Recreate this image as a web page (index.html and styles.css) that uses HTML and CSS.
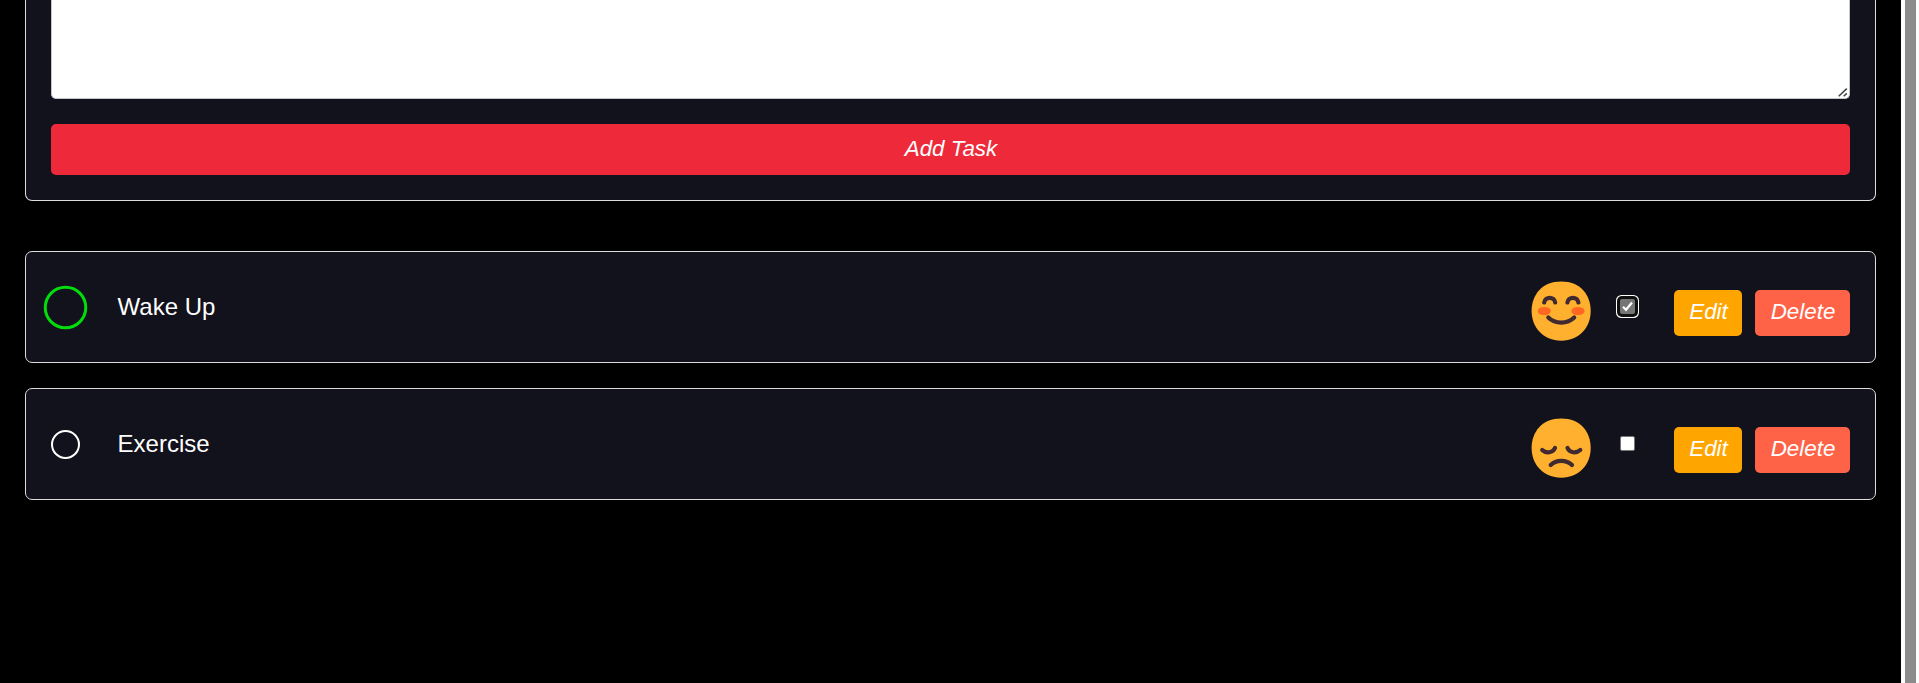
FILE: index.html
```html
<!DOCTYPE html>
<html lang="en">
<head>
<meta charset="utf-8">
<title>Tasks</title>
<link rel="stylesheet" href="styles.css">
</head>
<body>
<div class="app">
  <main class="page">
    <form class="card task-form">
      <div class="note">
        <svg class="grip" viewBox="0 0 10 9"><path d="M.7 8.3 8.8.6M5.7 8.3 8.8 5.4" fill="none" stroke="#444" stroke-width="1.5"/></svg>
      </div>
      <button type="button" class="btn add">Add Task</button>
    </form>
    <section class="list">
      <article class="card task">
        <span class="slot"><span class="ring done"></span></span>
        <span class="title">Wake Up</span>
        <svg class="face" viewBox="0 0 60 60">
          <path class="head" d="M30.2.5C49.5.5 59.7 14 59.7 30S48.5 59.7 30.2 59.7.6 46 .6 30 11 .5 30.2.5Z"/>
          <ellipse class="cheek" cx="13.3" cy="30" rx="6.6" ry="4.1"/>
          <ellipse class="cheek" cx="47" cy="30" rx="6.6" ry="4.1"/>
          <path class="line" d="M13.2 21.5C14 15.2 23.4 15.2 24.2 21.5M36.4 21.5C37.2 15.2 46.6 15.2 47.4 21.5M17.3 36.5C24 43.2 36.5 43.2 43.2 36.5"/>
        </svg>
        <span class="check checked"><svg viewBox="0 0 15 15"><path d="M3 7.8 6 10.8 12 3.5" fill="none" stroke="#fff" stroke-width="2.2"/></svg></span>
        <button type="button" class="btn edit">Edit</button>
        <button type="button" class="btn delete">Delete</button>
      </article>
      <article class="card task">
        <span class="slot"><span class="ring"></span></span>
        <span class="title">Exercise</span>
        <svg class="face" viewBox="0 0 60 60">
          <path class="head" d="M30.2.5C49.5.5 59.7 14 59.7 30S48.5 59.7 30.2 59.7.6 46 .6 30 11 .5 30.2.5Z"/>
          <path class="line" d="M11.2 32C15 35.8 22 34.8 24 30M36.5 30C38.5 34.8 45 35.8 49.3 32M19.7 47C25 41.4 35.5 41.4 41 47"/>
        </svg>
        <span class="check"></span>
        <button type="button" class="btn edit">Edit</button>
        <button type="button" class="btn delete">Delete</button>
      </article>
    </section>
  </main>
  <div class="scrollbar"></div>
</div>
</body>
</html>
```
FILE: styles.css
```css
* { box-sizing: border-box; }
body {
  margin: 0;
  background: #000;
  color: #fff;
  font-family: "Liberation Sans", Arial, sans-serif;
  font-size: 24px;
}
.app { display: flex; height: 683px; overflow: hidden; }
.page { flex: 1; padding: 0 25px; }
.scrollbar {
  width: 18px;
  background: #8b8b8b;
  border: solid #fcfcfc;
  border-width: 0 3px 0 4px;
}
.card {
  background: #12121c;
  border: 1px solid #ddd;
  border-radius: 7px;
}
.task-form {
  height: 201px;
  padding: 0 25px 25px;
  border-top: 0;
  border-radius: 0 0 7px 7px;
  display: flex;
  flex-direction: column;
  gap: 25px;
}
.note {
  flex: 1;
  display: flex;
  align-items: flex-end;
  justify-content: flex-end;
  padding: 0 1px 1px;
  background: #fff;
  border: 1px solid #c4c6cc;
  border-top: 0;
  border-radius: 0 0 5px 5px;
}
.grip { width: 10px; height: 9px; }
.btn {
  border: 0;
  border-radius: 5px;
  color: #fff;
  font-family: inherit;
  font-size: 22.4px;
  font-style: italic;
  line-height: 26px;
  padding: 9px 0 11px 1px;
}
.add { height: 51px; background: #ee2a3a; }
.list {
  display: flex;
  flex-direction: column;
  gap: 25px;
  margin-top: 50px;
}
.task {
  height: 112px;
  padding: 0 25px;
  display: flex;
  align-items: center;
}
.slot { width: 29px; display: flex; justify-content: center; }
.ring {
  flex: none;
  width: 29px;
  height: 29px;
  border: 2px solid #fff;
  border-radius: 50%;
}
.ring.done { border-color: #00dc0c; transform: scale(1.5); }
.title { flex: 1; margin-left: 37.6px; }
.face { width: 60px; height: 60px; margin: 8px 25px 0 0; }
.head { fill: #ffb02e; }
.cheek { fill: #ff6723; }
.line { fill: none; stroke: #402a32; stroke-width: 4.2; stroke-linecap: round; }
.check {
  width: 15px;
  height: 15px;
  margin: 0 39px 1px 4px;
  background: #fff;
  border: 1px solid #767676;
  border-radius: 2px;
}
.checked {
  display: flex;
  background: #757575;
  border: 0;
  box-shadow: 0 0 0 3px #101010, 0 0 0 4px #fff;
}
.edit { width: 68px; margin: 12px 13px 0 0; background: #ffa500; }
.delete { width: 95px; margin-top: 12px; background: #ff6347; }
```
